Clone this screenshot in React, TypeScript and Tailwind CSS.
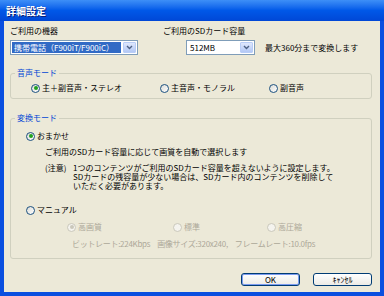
import React from 'react';

function Radio({ checked = false, disabled = false }: { checked?: boolean; disabled?: boolean }) {
  return (
    <span
      className={
        'relative inline-flex items-center justify-center w-[9px] h-[9px] rounded-full border shrink-0 ' +
        (disabled ? 'border-[#cac8bb] bg-[#f4f3ee]' : 'border-[#1c5180] bg-gradient-to-br from-[#dcdcd6] to-white')
      }
    >
      {checked && (
        <span className={'w-[4px] h-[4px] rounded-full ' + (disabled ? 'bg-[#cac8bb]' : 'bg-[#21a121]')} />
      )}
    </span>
  );
}

function Combo({ text, width, selected = false }: { text: string; width: string; selected?: boolean }) {
  return (
    <div className={`${width} h-[15px] flex border border-[#7f9db9] bg-white`}>
      <div className="flex-1 flex items-center p-[1px] min-w-0">
        <span
          className={
            'h-full flex items-center px-[2px] whitespace-nowrap ' +
            (selected ? 'bg-[#316ac5] text-white flex-1' : 'text-black')
          }
        >
          {text}
        </span>
      </div>
      <div className="w-[13px] m-[1px] flex items-center justify-center rounded-[1px] border border-[#b9cdf7] bg-gradient-to-b from-[#dfe8fd] to-[#b3c8f5]">
        <svg width="7" height="5" viewBox="0 0 7 5">
          <path d="M1 1 L3.5 3.5 L6 1" stroke="#4d6185" strokeWidth="1.4" fill="none" />
        </svg>
      </div>
    </div>
  );
}

function Group({ label, children, className = '' }: { label: string; children: React.ReactNode; className?: string }) {
  return (
    <fieldset className={`border border-[#d0d0bf] rounded-[3px] ${className}`}>
      <legend className="ml-[4px] px-[2px] text-[#0046d5] leading-[10px]">{label}</legend>
      {children}
    </fieldset>
  );
}

export default function App() {
  return (
    <div className="w-[384px] h-[296px] flex flex-col bg-[#0a4fe0] overflow-hidden font-['Noto_Sans_CJK_JP',sans-serif] text-[8px] leading-[10px] text-black">
      {/* タイトルバー */}
      <div className="h-[21px] shrink-0 flex items-center px-[6px] bg-gradient-to-b from-[#3d8ff7] via-[#0058e8] to-[#0047d6]">
        <span className="text-white font-bold text-[10px] [text-shadow:1px_1px_0_#0a1f7a]">詳細設定</span>
      </div>

      <div className="flex-1 flex flex-col mx-[4px] mb-[4px] bg-[#ece9d8] pl-[6px] pr-[8px] pt-[5px]">
        {/* 機器・容量 */}
        <div className="flex">
          <div className="w-[153px] flex flex-col">
            <span>ご利用の機器</span>
            <div className="mt-[4px]">
              <Combo text="携帯電話（F900iT/F900iC）" width="w-[128px]" selected />
            </div>
          </div>
          <div className="flex flex-col">
            <span>ご利用のSDカード容量</span>
            <div className="mt-[4px] flex items-center">
              <div className="ml-[23px]">
                <Combo text="512MB" width="w-[69px]" />
              </div>
              <span className="ml-[10px]">最大360分まで変換します</span>
            </div>
          </div>
        </div>

        {/* 音声モード */}
        <Group label="音声モード" className="mt-[13px] pt-[5px] pb-[5px]">
          <div className="flex items-center h-[10px] pl-[20px]">
            <div className="w-[129px] flex items-center gap-[2px]">
              <Radio checked />
              <span>主＋副音声・ステレオ</span>
            </div>
            <div className="w-[109px] flex items-center gap-[2px]">
              <Radio />
              <span>主音声・モノラル</span>
            </div>
            <div className="flex items-center gap-[2px]">
              <Radio />
              <span>副音声</span>
            </div>
          </div>
        </Group>

        {/* 変換モード */}
        <Group label="変換モード" className="mt-[14px] pt-[8px] pb-[9px]">
          <div className="flex items-center gap-[2px] pl-[15px] h-[10px]">
            <Radio checked />
            <span>おまかせ</span>
          </div>
          <div className="pl-[34px] mt-[6px]">ご利用のSDカード容量に応じて画質を自動で選択します</div>
          <div className="pl-[34px] mt-[6px] flex leading-[9px]">
            <span className="w-[28px] shrink-0">(注意)</span>
            <div className="flex flex-col">
              <span>1つのコンテンツがご利用のSDカード容量を超えないように設定します。</span>
              <span>SDカードの残容量が少ない場合は、SDカード内のコンテンツを削除して</span>
              <span>いただく必要があります。</span>
            </div>
          </div>
          <div className="flex items-center gap-[2px] pl-[15px] h-[10px] mt-[15px]">
            <Radio />
            <span>マニュアル</span>
          </div>
          <div className="flex items-center h-[10px] mt-[7px] pl-[56px] text-[#aca899]">
            <div className="w-[106px] flex items-center gap-[2px]">
              <Radio checked disabled />
              <span>高画質</span>
            </div>
            <div className="w-[94px] flex items-center gap-[2px]">
              <Radio disabled />
              <span>標準</span>
            </div>
            <div className="flex items-center gap-[2px]">
              <Radio disabled />
              <span>高圧縮</span>
            </div>
          </div>
          <div className="flex gap-[7px] h-[10px] mt-[7px] pl-[61px] text-[#aca899] whitespace-nowrap tracking-[-0.3px]">
            <span>ビットレート:224Kbps</span>
            <span>画像サイズ:320x240,</span>
            <span>フレームレート:10.0fps</span>
          </div>
        </Group>

        {/* ボタン */}
        <div className="mt-[14px] flex justify-end gap-[13px]">
          <button className="w-[59px] h-[13px] rounded-[3px] border border-[#003c74] bg-gradient-to-b from-white to-[#ecebe6] shadow-[inset_0_0_0_1px_#7b9bf0] flex items-center justify-center text-[8px] leading-none">
            OK
          </button>
          <button className="w-[59px] h-[13px] rounded-[3px] border border-[#003c74] bg-gradient-to-b from-white to-[#ecebe6] flex items-center justify-center text-[8px] leading-none">
            ｷｬﾝｾﾙ
          </button>
        </div>
      </div>
    </div>
  );
}
